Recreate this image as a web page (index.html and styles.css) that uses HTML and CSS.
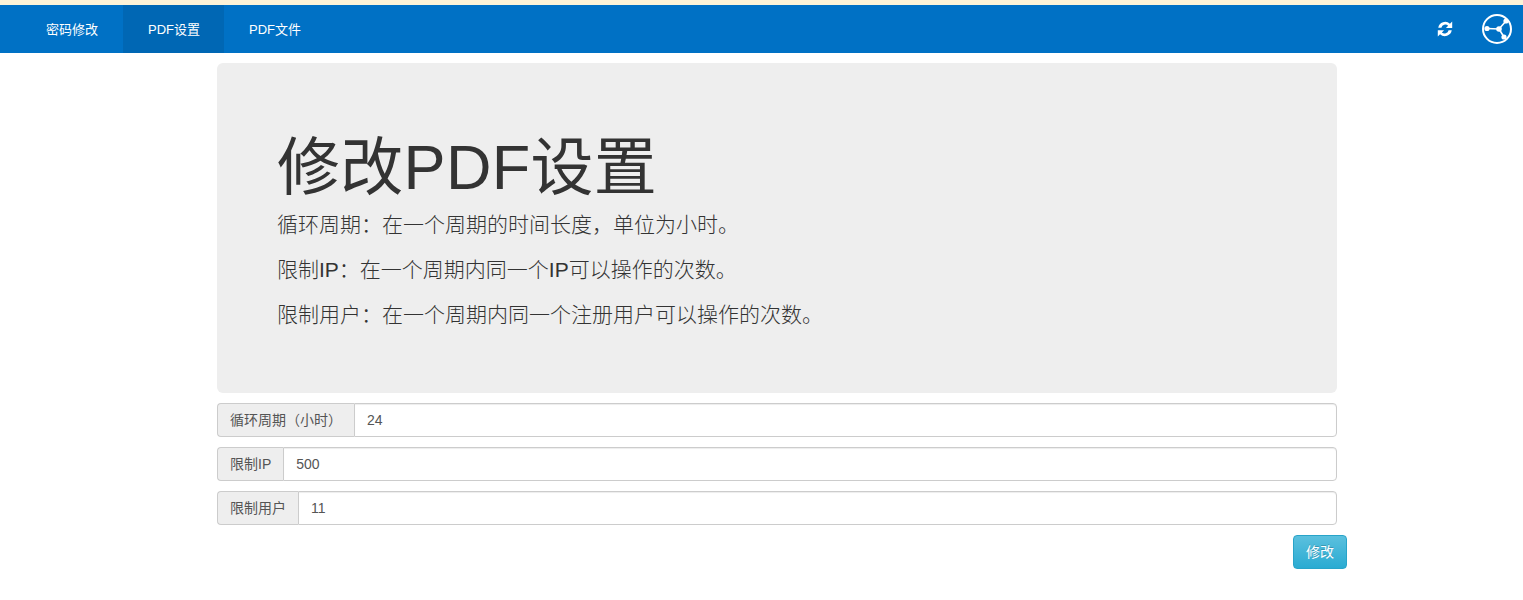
FILE: index.html
```html
<!DOCTYPE html>
<html lang="zh-CN">
<head>
    <meta charset="UTF-8">
    <title>修改PDF设置</title>
    <link rel="stylesheet" href="styles.css">
</head>
<body>

<!-- 导航 -->
<nav class="navbar">
    <ul class="nav-list">
        <li class="nav-item">密码修改</li>
        <li class="nav-item active">PDF设置</li>
        <li class="nav-item">PDF文件</li>
    </ul>
    <div class="nav-icons">
        <svg class="icon-refresh" width="18" height="18" viewBox="0 0 16 16">
            <path d="M2 6.8A6.2 6.2 0 0 1 12.4 3.4L14.4 1.4V7H8.8L10.8 5A3.6 3.6 0 0 0 4.8 6.8Z" fill="#fff"/>
            <path d="M14 9.2A6.2 6.2 0 0 1 3.6 12.6L1.6 14.6V9H7.2L5.2 11A3.6 3.6 0 0 0 11.2 9.2Z" fill="#fff"/>
        </svg>
        <svg class="icon-share" width="32" height="32" viewBox="0 0 32 32">
            <circle cx="16" cy="16" r="14" fill="none" stroke="#fff" stroke-width="2"/>
            <path d="M6 15.5L18 16L25 8M18 16L23 24" fill="none" stroke="#fff" stroke-width="1.6"/>
            <circle cx="6" cy="15.5" r="2.6" fill="#fff"/>
            <circle cx="18" cy="16" r="2.8" fill="#fff"/>
            <circle cx="25" cy="8" r="2.6" fill="#fff"/>
            <circle cx="23" cy="24" r="2.6" fill="#fff"/>
        </svg>
    </div>
</nav>

<div class="container">
    <div class="jumbotron">
        <h1>修改PDF设置</h1>
        <p>循环周期：在一个周期的时间长度，单位为小时。</p>
        <p>限制IP：在一个周期内同一个IP可以操作的次数。</p>
        <p>限制用户：在一个周期内同一个注册用户可以操作的次数。</p>
    </div>

    <form class="settings-form">
        <div class="input-group">
            <span class="input-addon">循环周期（小时）</span>
            <input class="form-control" type="text" value="24">
        </div>
        <div class="input-group">
            <span class="input-addon">限制IP</span>
            <input class="form-control" type="text" value="500">
        </div>
        <div class="input-group">
            <span class="input-addon">限制用户</span>
            <input class="form-control" type="text" value="11">
        </div>
        <div class="form-actions">
            <button class="btn-info" type="button">修改</button>
        </div>
    </form>
</div>

</body>
</html>
```

FILE: styles.css
```css
* {
    box-sizing: border-box;
}
body {
    margin: 0;
    font-family: "Liberation Sans", "Noto Sans CJK SC", sans-serif;
    font-size: 14px;
    line-height: 1.43;
    color: #333;
    background: #fff;
}
.navbar {
    display: flex;
    justify-content: space-between;
    align-items: stretch;
    height: 53px;
    background: #0071c5;
    border-top: 5px solid #fdf3d8;
}
.nav-list {
    display: flex;
    margin: 0;
    padding: 0 0 0 21px;
    list-style: none;
}
.nav-item {
    padding: 0 25px;
    font-size: 13px;
    line-height: 49px;
    color: #fff;
}
.nav-item.active {
    background: #0067b4;
    padding-right: 24px;
}
.nav-icons {
    display: flex;
    align-items: center;
    gap: 27px;
    padding-right: 10px;
}
.container {
    width: 1130px;
    margin-left: 217px;
    padding-top: 10px;
}
.jumbotron {
    width: 1120px;
    height: 330px;
    padding: 70px 60px 0;
    margin-bottom: 10px;
    background: #eee;
    border-radius: 6px;
}
.jumbotron h1 {
    margin: 0 0 8px;
    font-size: 63px;
    font-weight: 400;
    line-height: 1.1;
    letter-spacing: 0.3px;
}
.jumbotron p {
    margin: 0 0 15px;
    font-size: 21px;
    font-weight: 200;
    line-height: 30px;
}
.input-group {
    display: flex;
    width: 1120px;
    height: 34px;
    margin-bottom: 10px;
}
.input-addon {
    padding: 6px 12px;
    line-height: 20px;
    color: #555;
    background: #eee;
    border: 1px solid #ccc;
    border-right: 0;
    border-radius: 4px 0 0 4px;
    white-space: nowrap;
}
.form-control {
    flex: 1;
    min-width: 0;
    padding: 6px 12px;
    font: inherit;
    color: #555;
    background: #fff;
    border: 1px solid #ccc;
    border-radius: 0 4px 4px 0;
    box-shadow: inset 0 1px 1px rgba(0,0,0,.075);
}
.form-actions {
    display: flex;
    justify-content: flex-end;
}
.btn-info {
    width: 54px;
    height: 34px;
    padding: 0;
    font: inherit;
    color: #fff;
    background: linear-gradient(to bottom, #5bc0de, #2aabd2);
    border: 1px solid #28a4c9;
    border-radius: 4px;
    text-shadow: 0 -1px 0 rgba(0,0,0,.2);
}
```
